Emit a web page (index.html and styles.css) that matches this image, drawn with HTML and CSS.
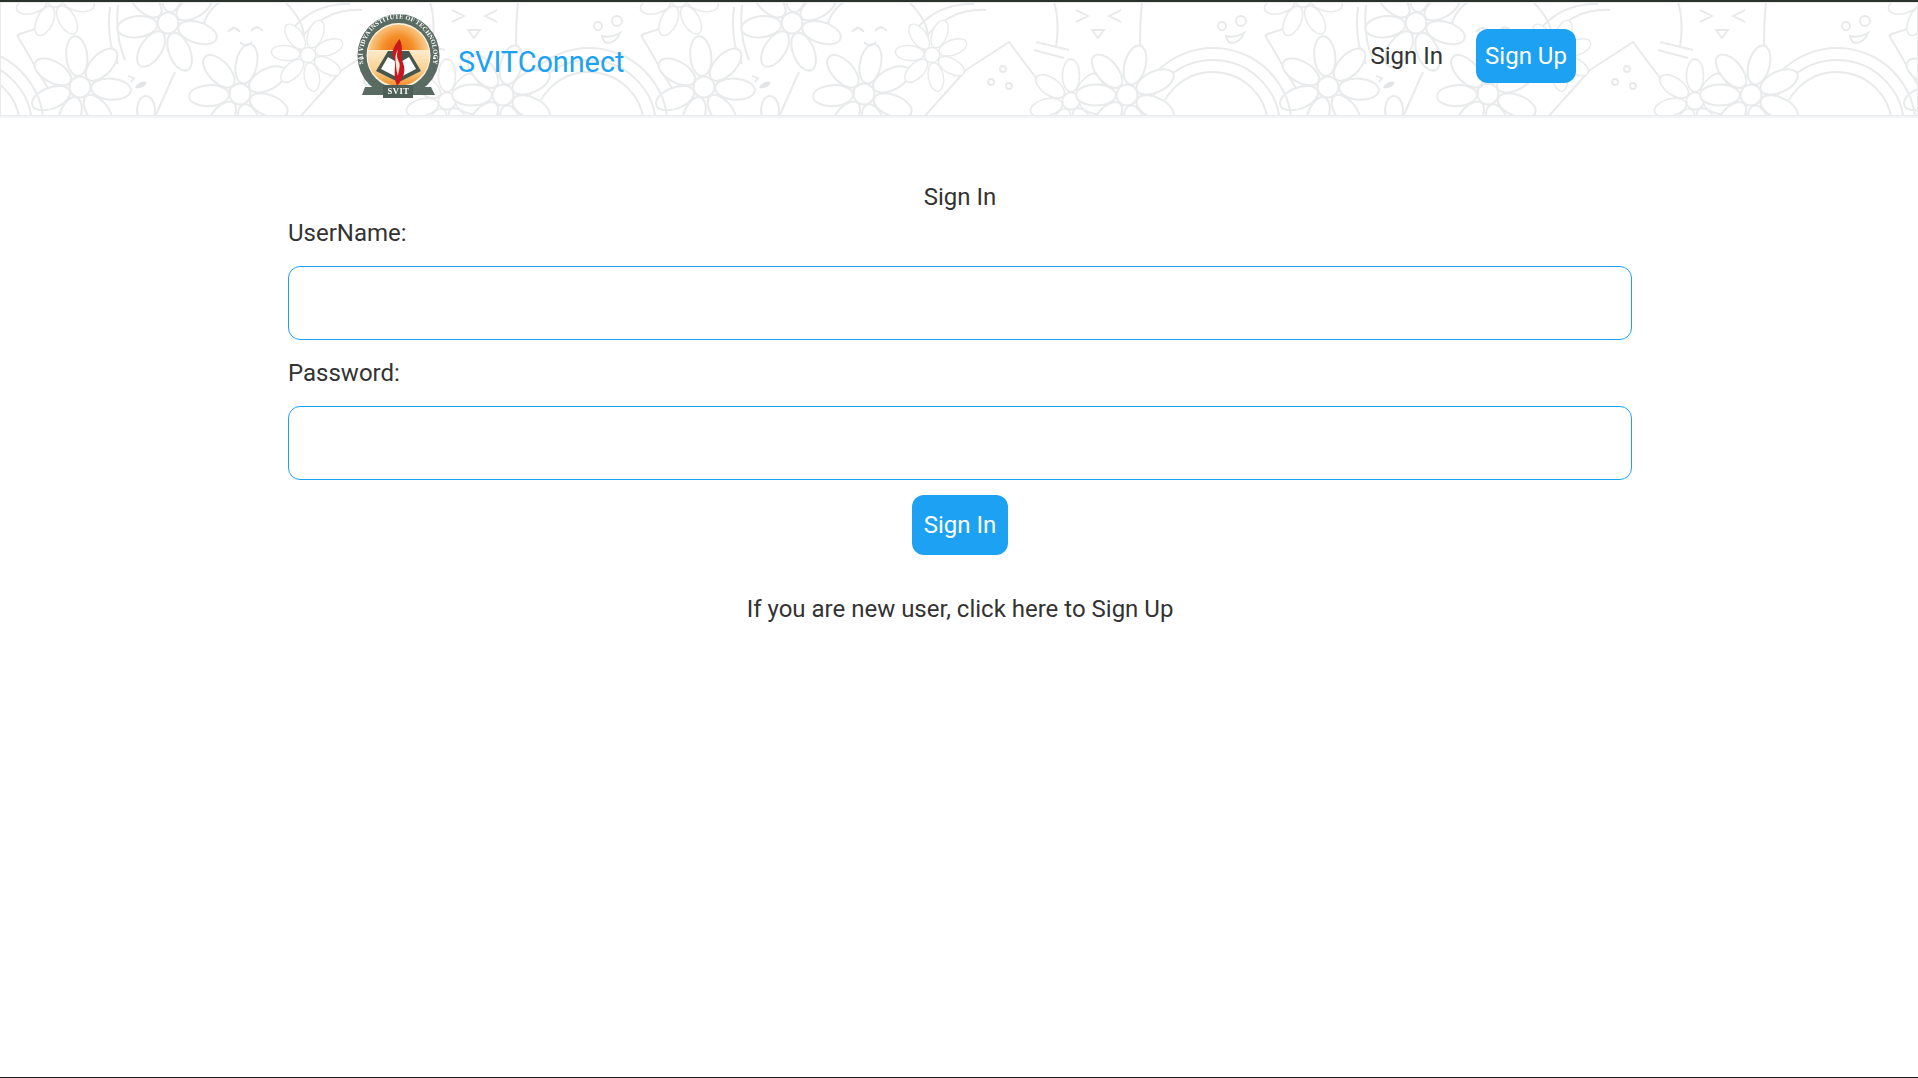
FILE: index.html
```html
<!DOCTYPE html>
<html lang="en">
<head>
<meta charset="utf-8">
<title>SVITConnect</title>
<link rel="stylesheet" href="styles.css">
</head>
<body>
<header class="site-header">
  <svg class="doodles" aria-hidden="true">
    <defs>
      <g id="flower">
        <ellipse cy="-31" rx="10.500" ry="20"/>
        <ellipse cy="-31" rx="10.500" ry="20" transform="rotate(50)"/>
        <ellipse cy="-31" rx="10.500" ry="20" transform="rotate(100)"/>
        <ellipse cy="-31" rx="10.500" ry="20" transform="rotate(150)"/>
        <ellipse cy="-31" rx="10.500" ry="20" transform="rotate(205)"/>
        <ellipse cy="-31" rx="10.500" ry="20" transform="rotate(255)"/>
        <ellipse cy="-31" rx="10.500" ry="20" transform="rotate(305)"/>
        <circle r="10.500"/>
      </g>
      <g id="tile">
        <path d="M17 33 L50 90 M17 33 L50 22 M175 70 L155 115 L180 118 M110 5 Q106 40 118 62 M118 3 Q115 35 125 58"/>
        <path d="M280 -5 Q318 30 296 56 Q280 75 252 72 M200 40 Q205 -10 250 -5"/>
        <path d="M290 30 A70 70 0 0 1 350 2 M300 38 A70 70 0 0 1 362 8 M430 0 Q436 20 432 45 M518 0 Q514 40 518 75 M342 68 L385 40 L430 100 M342 68 L300 115"/>
        <path d="M412 40 L445 48 M410 48 L440 56"/>
        <path d="M510 125 A78 78 0 0 1 668 125 M522 125 A66 66 0 0 1 656 125 M534 125 A54 54 0 0 1 644 125"/>
        <use href="#flower" transform="translate(55 -3) scale(.78)"/>
        <use href="#flower" transform="translate(168 21) rotate(8)"/>
        <use href="#flower" transform="translate(80 85) rotate(-6)"/>
        <use href="#flower" transform="translate(240 92) rotate(12)"/>
        <use href="#flower" transform="translate(308 53) scale(.72) rotate(20)"/>
        <use href="#flower" transform="translate(447 99) scale(.82)"/>
        <use href="#flower" transform="translate(503 93) rotate(15)"/>
        <ellipse cx="146" cy="108" rx="9" ry="14"/>
        <path class="ink" d="M228 30 Q234 22 240 30 M251 29 Q257 22 263 29 M240 40 Q246 47 252 40 M128 74 L134 76 L131 80"/>
        <ellipse class="ink-solid" cx="141" cy="83" rx="6" ry="2.600" transform="rotate(-25 141 83)"/>
        <path class="ink" d="M452 8 L464 14 L452 20 M497 8 L485 14 L497 20 M468 28 L480 28 L474 36 Z"/>
        <circle class="ink" cx="598" cy="24" r="4"/><circle class="ink" cx="617" cy="19" r="5"/>
        <path class="ink" d="M602 34 Q612 36 620 31 Q616 41 607 41 Q603 40 602 34Z"/>
        <circle class="ink" cx="367" cy="80" r="3"/><circle class="ink" cx="379" cy="67" r="3"/><circle class="ink" cx="385" cy="84" r="3"/>
      </g>
      <pattern id="doodle-tile" width="624" height="118" patternUnits="userSpaceOnUse">
        <use href="#tile"/>
        <use href="#tile" x="-624"/>
        <use href="#tile" x="624"/>
      </pattern>
    </defs>
    <rect width="100%" height="100%" fill="url(#doodle-tile)"/>
  </svg>
  <div class="header-inner">
    <a class="brand" href="#">
      <svg class="logo" viewBox="350 10 96 96" role="img" aria-label="SVIT logo">
        <defs>
          <radialGradient id="sun" gradientUnits="userSpaceOnUse" cx="398" cy="50" r="30">
            <stop offset="0" stop-color="#f26a12"/>
            <stop offset=".5" stop-color="#f38f28"/>
            <stop offset="1" stop-color="#fad093"/>
          </radialGradient>
          <linearGradient id="ground" x1="0" y1="0" x2="0" y2="1">
            <stop offset="0" stop-color="#fdeccd"/>
            <stop offset=".55" stop-color="#fad08f"/>
            <stop offset="1" stop-color="#ef8f2a"/>
          </linearGradient>
          <path id="ring-arc" d="M363 62 A35.500 38 0 1 1 433 62"/>
        </defs>
        <ellipse cx="398.500" cy="54.500" rx="41" ry="41.500" fill="#5a6b63"/>
        <ellipse cx="398.500" cy="54.500" rx="32" ry="32.500" fill="#fff3e0"/>
        <path d="M368 49 A31 31 0 0 1 429 49 Z" fill="url(#sun)"/>
        <path d="M368 49 H429 Q431 62 424 72 Q413 85 398.500 85 Q384 85 373 72 Q366 62 368 49Z" fill="url(#ground)"/>
        <path d="M388 50 H396 V80 L376 70Z" fill="#47564c"/>
        <path d="M409 50 H401 V80 L421 70Z" fill="#47564c"/>
        <path d="M388 56 L396.500 61 V76 L381 68Z" fill="#fff"/>
        <path d="M409 56 L400.500 61 V76 L416 68Z" fill="#fff"/>
        <path d="M399.500 38 C393 46 391 52 394 58 C397 64 392 72 397 85 C404 77 406 69 403 62 C400 55 404 46 399.500 38Z" fill="#c9171e"/>
        <path d="M398.500 48 C396 53 397 57 399 61 C401 65 398 71 398 75 C396 69 396 64 395.500 60 C395 55 396 51 398.500 48Z" fill="#fbe9d6"/>
        <path d="M365 86 L431 86 L435 94 L362 94Z" fill="#5a6b63"/>
        <path d="M383 84 H413 V97 H383Z" fill="#4e5f57"/>
        <text class="logo-motto" x="398.500" y="93" text-anchor="middle">SVIT</text>
        <text class="logo-ring"><textPath href="#ring-arc" startOffset="50%" text-anchor="middle">SAI VIDYA INSTITUTE OF TECHNOLOGY</textPath></text>
        <path d="M361 58 l1.500 -3 1.500 3 -3 -2 h3z M433 58 l1.500 -3 1.500 3 -3 -2 h3z" fill="#fff"/>
      </svg>
      <span class="brand-name">SVITConnect</span>
    </a>
    <nav class="main-nav">
      <a class="nav-link" href="#">Sign In</a>
      <a class="btn nav-btn" href="#">Sign Up</a>
    </nav>
  </div>
</header>
<main class="signin">
  <h1 class="signin-title">Sign In</h1>
  <form class="signin-form">
    <label class="field-label" for="username">UserName:</label>
    <input class="field-input" id="username" type="text">
    <label class="field-label" for="password">Password:</label>
    <input class="field-input" id="password" type="password">
    <button class="btn form-btn" type="button">Sign In</button>
  </form>
  <p class="signup-hint">If you are new user, click here to Sign Up</p>
</main>
</body>
</html>
```
FILE: styles.css
```css
* { box-sizing: border-box; }
html, body { height: 100%; }
body {
  margin: 0;
  font-family: Roboto, "Liberation Sans", sans-serif;
  color: #333;
  background: #fff;
  border-top: 2px solid #2b322c;
  border-bottom: 1px solid #222;
  overflow: hidden;
}
a { text-decoration: none; color: inherit; }

.site-header {
  position: relative;
  height: 116px;
  border-bottom: 2px solid #f3f4f6;
  overflow: hidden;
}
.doodles {
  position: absolute;
  inset: 0;
  width: 100%;
  height: 100%;
  fill: #fff;
  stroke: #e8eaeb;
  stroke-width: 2;
  filter: blur(.4px);
}
.doodles path { fill: none; }
.doodles .ink { stroke: #e6e8ea; stroke-width: 1.8; fill: none; }
.doodles .ink-solid { fill: #e3e5e7; stroke: none; }

.header-inner {
  position: relative;
  width: 1226px;
  height: 100%;
  margin-left: 350px;
  display: flex;
  align-items: center;
  justify-content: space-between;
}
.brand { display: flex; align-items: center; gap: 12px; }
.logo { width: 96px; height: 96px; display: block; filter: blur(.3px); }
.logo-ring { font: 700 6.4px "Liberation Serif", serif; fill: #fff; letter-spacing: .1px; }
.logo-motto { font: 700 8.5px "Liberation Serif", serif; fill: #fff; letter-spacing: .6px; }
.brand-name { font-size: 28.8px; line-height: 34px; color: #1da1f2; padding-top: 6px; }

.main-nav { display: flex; align-items: center; gap: 33px; padding-bottom: 7px; }
.nav-link { font-size: 24px; line-height: 28px; }
.btn {
  font-family: inherit;
  font-size: 24px;
  color: #fff;
  background: #1da1f2;
  border: 0;
  border-radius: 12px;
  text-align: center;
}
.nav-btn { width: 100px; height: 54px; line-height: 54px; display: block; }

.signin { width: 1344px; margin-left: 288px; padding-top: 64px; text-align: center; }
.signin-title { margin: 0; font-size: 24px; font-weight: 400; line-height: 30px; }
.signin-form { display: flex; flex-direction: column; align-items: center; }
.field-label { align-self: flex-start; font-size: 24px; line-height: 28px; margin-top: 7px; }
.field-input {
  width: 100%;
  height: 74px;
  margin-top: 19px;
  border: 1.5px solid #1da1f2;
  border-radius: 12px;
  background: #fff;
  outline: 0;
  margin-bottom: 12px;
}
.form-btn { width: 96px; height: 60px; margin-top: 3px; }
.signup-hint { margin: 38px 0 0; font-size: 24px; line-height: 32px; }
```
